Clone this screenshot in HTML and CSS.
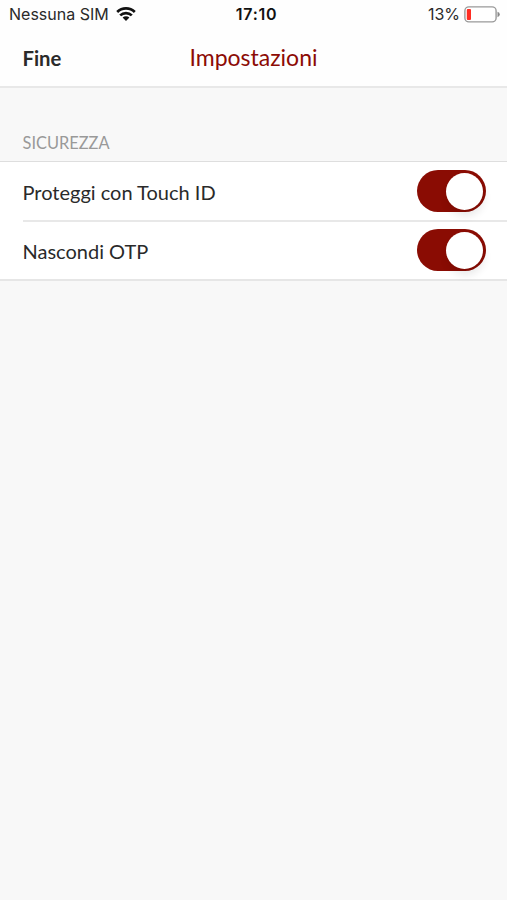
FILE: index.html
```html
<!DOCTYPE html>
<html lang="it">
<head>
    <meta charset="UTF-8">
    <meta name="viewport" content="width=device-width, initial-scale=1.0">
    <title>Impostazioni</title>
    <link rel="stylesheet" href="styles.css">
</head>
<body>

    <!-- Header -->
    <header class="header">
        <div class="status-bar">
            <div class="carrier">
                <span class="carrier-name">Nessuna SIM</span>
                <svg class="wifi" viewBox="0 0 20 14" width="20" height="14">
                    <path d="M1.2 5a12.6 12.6 0 0 1 17.6 0M4.2 8.4a8.3 8.3 0 0 1 11.6 0" fill="none" stroke="#111" stroke-width="2.7"/>
                    <path d="M6.6 10.6a4.9 4.9 0 0 1 6.8 0L10 14z" fill="#111"/>
                </svg>
            </div>
            <span class="time">17:10</span>
            <div class="battery">
                <span class="battery-level">13%</span>
                <svg viewBox="0 0 36 17" width="36" height="17">
                    <rect x="0.9" y="0.9" width="31.2" height="15" rx="4" fill="#fff" stroke="#999" stroke-width="1.4"/>
                    <rect x="2.8" y="3" width="4.2" height="11" rx="1" fill="#ff2d23"/>
                    <path d="M33.5 5.8q2.3.8 2.3 2.7t-2.3 2.7z" fill="#888"/>
                </svg>
            </div>
        </div>
        <nav class="nav-bar">
            <a class="done">Fine</a>
            <h1 class="title">Impostazioni</h1>
        </nav>
    </header>

    <!-- Security Section -->
    <section class="section">
        <h2 class="section-title">SICUREZZA</h2>
        <div class="list">
            <label class="row">
                <span class="row-label">Proteggi con Touch ID</span>
                <input class="toggle" type="checkbox" checked>
            </label>
            <label class="row">
                <span class="row-label">Nascondi OTP</span>
                <input class="toggle" type="checkbox" checked>
            </label>
        </div>
    </section>

</body>
</html>
```

FILE: styles.css
```css
/* General Styles */
* {
    box-sizing: border-box;
}

body {
    margin: 0;
    min-height: 100vh;
    background-color: #f8f8f8;
    color: #2a2a2a;
    font-family: Lato, sans-serif;
}

/* Header */
.header {
    height: 88px;
    background-color: #fefefe;
    border-bottom: 2px solid #e8e8e8;
}

.status-bar {
    display: grid;
    grid-template-columns: 1fr auto 1fr;
    align-items: center;
    height: 28px;
    padding: 0 7px 0 9px;
    color: #2a2a2a;
    font-family: Inter, sans-serif;
    font-size: 16px;
    line-height: 20px;
}

.carrier,
.battery {
    display: flex;
    align-items: center;
}

.carrier {
    gap: 7px;
}

.battery {
    justify-content: flex-end;
    gap: 4px;
}

.time {
    padding-left: 4px;
    color: #111;
    font-weight: 600;
    letter-spacing: 0.7px;
}

.nav-bar {
    display: grid;
    grid-template-columns: 1fr auto 1fr;
    align-items: center;
    height: 58px;
    padding: 2px 22.5px 0;
}

.done {
    font-size: 20.3px;
    font-weight: 700;
}

.title {
    margin: 0 0 2px;
    color: #8c0b05;
    font-size: 23px;
    font-weight: 400;
}

/* Security Section */
.section {
    padding-top: 45px;
}

.section-title {
    margin: 0;
    padding-left: 22.5px;
    height: 28px;
    color: #999;
    font-size: 16.4px;
    font-weight: 400;
    line-height: 20px;
}

.list {
    padding-left: 22.5px;
    background-color: #fff;
    border-top: 1px solid #dedede;
    border-bottom: 2px solid #e6e6e6;
}

.row {
    display: flex;
    align-items: center;
    justify-content: space-between;
    height: 58px;
    padding-right: 21px;
    font-size: 20px;
}

.row + .row {
    height: 59px;
    padding-bottom: 1px;
    border-top: 2px solid #e8e8e8;
}

.row-label {
    padding-top: 2px;
}

/* Toggle */
.toggle {
    appearance: none;
    display: flex;
    justify-content: flex-end;
    width: 69.5px;
    height: 42px;
    margin: 0;
    padding: 2.5px 3px;
    border-radius: 21px;
    background-color: #8a0c03;
}

.toggle::before {
    content: "";
    width: 37px;
    height: 37px;
    border-radius: 50%;
    background-color: #fff;
    box-shadow: 1px 6px 8px rgba(0, 0, 0, 0.09);
}
```
